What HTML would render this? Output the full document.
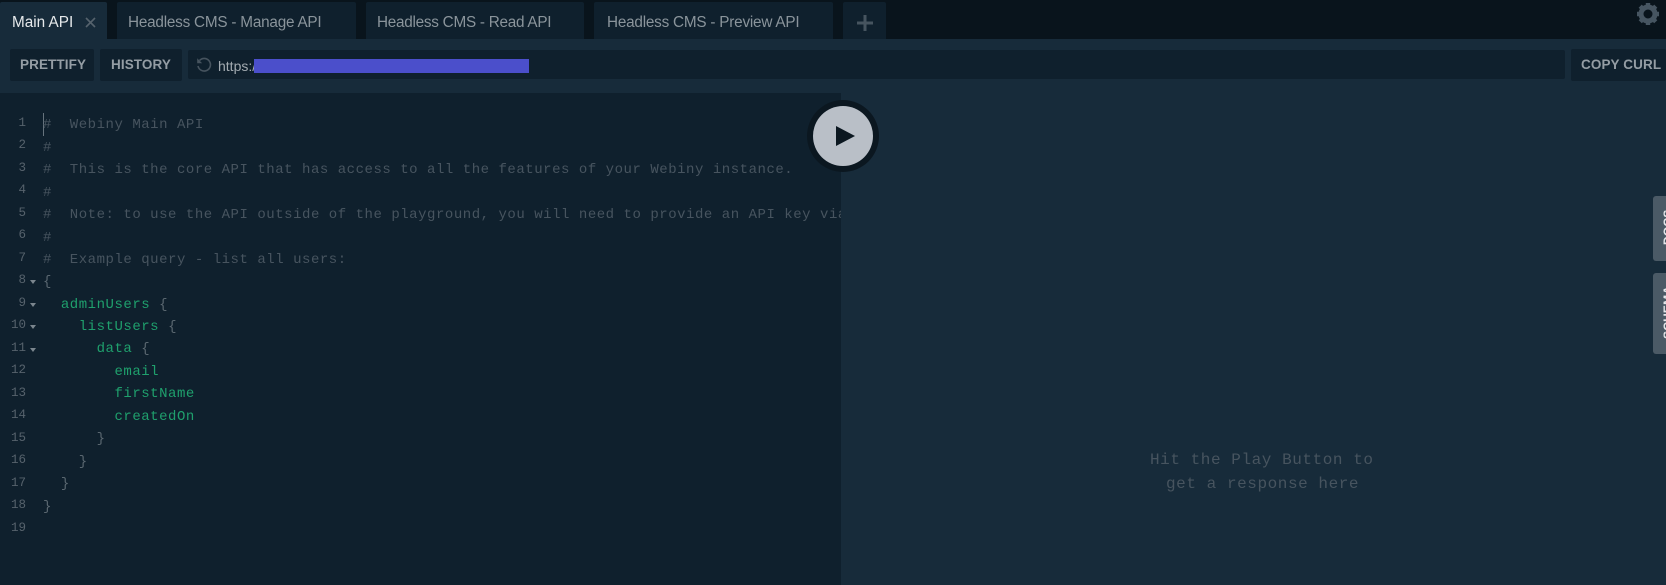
<!DOCTYPE html>
<html><head><meta charset="utf-8">
<style>
html,body{margin:0;padding:0;width:1666px;height:585px;overflow:hidden;background:#172b3a}
div,span{position:absolute;white-space:pre}
#top{left:0;top:0;width:1666px;height:39px;background:#09141c}
.tab{top:2px;height:37px;background:#0f202d;border-radius:2px 2px 0 0}
.tt{top:13px;font:15.3px/20px "Liberation Sans",sans-serif;color:#8a949b;letter-spacing:-.22px}
.btn{top:49px;height:32px;background:#0f202d;border-radius:2px}
.bt{top:55px;font:bold 13.5px/20px "Liberation Sans",sans-serif;color:#949da4;letter-spacing:.1px}
#ed{left:0;top:93px;width:841px;height:492px;background:#0f202d;overflow:hidden}
.l{left:43px;font:14px/22px "Liberation Mono",monospace;letter-spacing:.53px;color:#47545f}
.g{color:#1fa06d}
.b{color:#5a6770;position:static}
.k{position:static;color:#1fa06d}
.n{width:26px;left:0;text-align:right;font:12.5px/18px "Liberation Mono",monospace;color:#56626c}
.a{left:30px;width:0;height:0;border-left:3px solid transparent;border-right:3px solid transparent;border-top:4px solid #7b868e}
.side{left:1653px;width:30px;background:#4b5a66;border-radius:3px 0 0 3px;overflow:hidden}
.st{font:bold 12px/16px "Liberation Sans",sans-serif;color:#e4e7ea;transform:rotate(-90deg);transform-origin:0 0;letter-spacing:.2px}
.h{font:16px/24px "Liberation Mono",monospace;letter-spacing:.56px;color:#47545f}
</style></head><body>
<div id="top"></div>
<div class="tab" style="left:0;width:107px;background:#172b3a"></div>
<div class="tt" style="left:12px;color:#e6e9eb;letter-spacing:0">Main API</div>
<svg style="position:absolute;left:85px;top:17px" width="11" height="11" viewBox="0 0 11 11"><path d="M1 1L10 10M10 1L1 10" stroke="#56636d" stroke-width="1.6" fill="none"/></svg>
<div class="tab" style="left:117px;width:239px"></div>
<div class="tt" style="left:128px">Headless CMS - Manage API</div>
<div class="tab" style="left:366px;width:218px"></div>
<div class="tt" style="left:377px;letter-spacing:-.26px">Headless CMS - Read API</div>
<div class="tab" style="left:594px;width:239px"></div>
<div class="tt" style="left:607px">Headless CMS - Preview API</div>
<div class="tab" style="left:843px;width:43px"></div>
<svg style="position:absolute;left:857px;top:15px" width="16" height="16" viewBox="0 0 16 16"><path d="M8 0V16M0 8H16" stroke="#46545f" stroke-width="3" fill="none"/></svg>
<svg style="position:absolute;left:1636px;top:2px" width="24" height="24" viewBox="0 0 24 24"><circle cx="12" cy="12" r="7" fill="none" stroke="#465561" stroke-width="5"/><g stroke="#465561" stroke-width="4.4" fill="none"><path d="M12 1V23M1 12H23M4.2 4.2L19.8 19.8M19.8 4.2L4.2 19.8" stroke-dasharray="5 12 5"/></g></svg>

<div class="btn" style="left:10px;width:84px"></div>
<div class="bt" style="left:20px">PRETTIFY</div>
<div class="btn" style="left:100px;width:82px"></div>
<div class="bt" style="left:111px">HISTORY</div>
<div class="btn" style="left:188px;width:1377px;top:50px;height:29px"></div>
<svg style="position:absolute;left:196px;top:57px" width="16" height="16" viewBox="0 0 16 16"><path d="M3.5 3.5A6.3 6.3 0 1 1 2 9" stroke="#46535e" stroke-width="1.6" fill="none"/><path d="M1.2 1.2V6.2H6.2Z" fill="#46535e"/></svg>
<div style="left:218px;top:56px;font:14px/20px 'Liberation Sans',sans-serif;color:#a3abb1">https:/</div>
<div style="left:254px;top:59px;width:275px;height:14px;background:#4b4fcb"></div>
<div class="btn" style="left:1571px;width:95px"></div>
<div class="bt" style="left:1581px">COPY CURL</div>

<div id="ed">
<div style="left:43px;top:20px;width:1px;height:23px;background:#66737d"></div>
<div class="l" style="top:21px"><span class="b" style="color:#47545f">#</span>  Webiny Main API</div>
<div class="l" style="top:44px">#</div>
<div class="l" style="top:66px">#  This is the core API that has access to all the features of your Webiny instance.</div>
<div class="l" style="top:89px">#</div>
<div class="l" style="top:111px">#  Note: to use the API outside of the playground, you will need to provide an API key via the Authorization header</div>
<div class="l" style="top:134px">#</div>
<div class="l" style="top:156px">#  Example query - list all users:</div>
<div class="l" style="top:178px"><span class="b">{</span></div>
<div class="l" style="top:201px">  <span class="k">adminUsers</span> <span class="b">{</span></div>
<div class="l" style="top:223px">    <span class="k">listUsers</span> <span class="b">{</span></div>
<div class="l" style="top:245px">      <span class="k">data</span> <span class="b">{</span></div>
<div class="l" style="top:268px">        <span class="k">email</span></div>
<div class="l" style="top:290px">        <span class="k">firstName</span></div>
<div class="l" style="top:313px">        <span class="k">createdOn</span></div>
<div class="l" style="top:335px">      <span class="b">}</span></div>
<div class="l" style="top:358px">    <span class="b">}</span></div>
<div class="l" style="top:380px">  <span class="b">}</span></div>
<div class="l" style="top:403px"><span class="b">}</span></div>
<div class="n" style="top:21px">1</div>
<div class="n" style="top:43px">2</div>
<div class="n" style="top:66px">3</div>
<div class="n" style="top:88px">4</div>
<div class="n" style="top:111px">5</div>
<div class="n" style="top:133px">6</div>
<div class="n" style="top:156px">7</div>
<div class="n" style="top:178px">8</div>
<div class="n" style="top:201px">9</div>
<div class="n" style="top:223px">10</div>
<div class="n" style="top:246px">11</div>
<div class="n" style="top:268px">12</div>
<div class="n" style="top:291px">13</div>
<div class="n" style="top:313px">14</div>
<div class="n" style="top:336px">15</div>
<div class="n" style="top:358px">16</div>
<div class="n" style="top:381px">17</div>
<div class="n" style="top:403px">18</div>
<div class="n" style="top:426px">19</div>
<div class="a" style="top:187px"></div>
<div class="a" style="top:210px"></div>
<div class="a" style="top:232px"></div>
<div class="a" style="top:255px"></div>
</div>

<svg style="position:absolute;left:807px;top:100px" width="72" height="72" viewBox="0 0 72 72"><circle cx="36" cy="36" r="36" fill="#0b1720"/><circle cx="36" cy="36" r="30" fill="#b9bfc7"/><path d="M29 26L48 36L29 46Z" fill="#0b1720"/></svg>

<div class="side" style="top:196px;height:65px"><div class="st" style="left:7px;top:49px">DOCS</div></div>
<div class="side" style="top:273px;height:81px"><div class="st" style="left:7px;top:66px">SCHEMA</div></div>

<div class="h" style="left:1150px;top:448px">Hit the Play Button to</div>
<div class="h" style="left:1166px;top:472px">get a response here</div>
</body></html>
